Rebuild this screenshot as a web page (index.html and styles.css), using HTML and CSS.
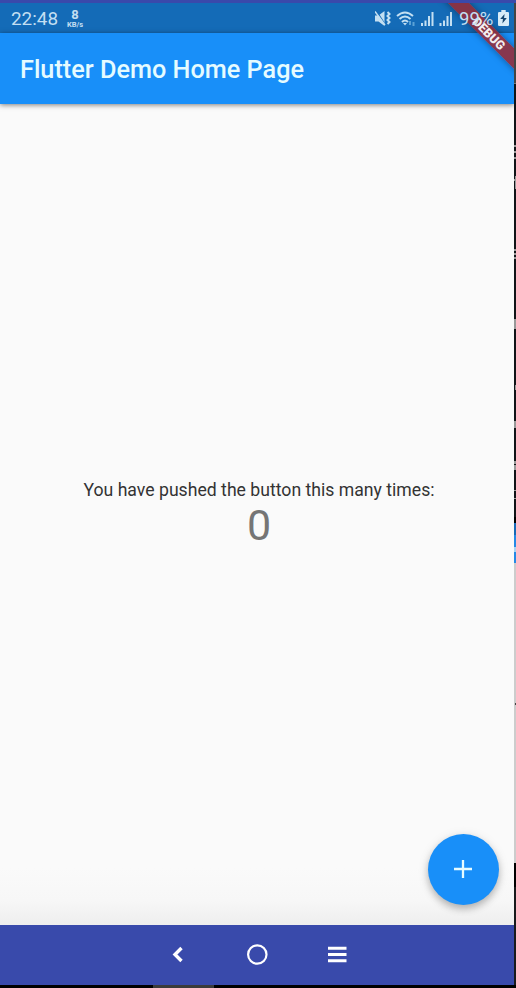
FILE: index.html
```html
<!DOCTYPE html>
<html lang="en">
<head>
<meta charset="utf-8">
<title>Flutter Demo</title>
<link rel="stylesheet" href="styles.css">
</head>
<body>
<div class="desktop">
  <div class="phone">
    <div class="window-edge"></div>
    <div class="screen">
      <header class="status">
        <span class="clock">22:48</span>
        <span class="rate"><b>8</b><small>KB/s</small></span>
        <svg class="status-icons" width="80" height="20" viewBox="0 0 80 20" fill="none" stroke="#c3dff2">
          <path d="M0 6.500h3.500L9.500 2v15l-6-4.500H0z" fill="#c3dff2" stroke="none"/>
          <path d="M1.500 2l9 14" stroke="#146bb7" stroke-width="1.300"/>
          <path d="M0 2.500l10 13.500" stroke-width="1.400"/>
          <path d="M12.500 3l2 2-2 2 2 2-2 2 2 2-2 2" stroke-width="2"/>
          <path d="M22 7q8-7 16 0M24.500 10q5.500-5 11 0M27 13q3-3 6 0" stroke-width="2"/>
          <path d="M28 14h4l-2 2.500z" fill="#c3dff2" stroke="none"/>
          <path d="M35 12v4M38.500 13v4" stroke="#5ba2d6" stroke-width="2"/>
          <path d="M47 14v3M50.500 11.500V17M54 7v10M57.500 3v14M65.500 14v3M69 11.500V17M72.500 7v10M76 3v14" stroke-width="2"/>
        </svg>
        <span class="percent">99%</span>
        <svg class="battery" width="11" height="16" viewBox="0 0 10 16" preserveAspectRatio="none">
          <path d="M3 0h4v2h2q1 0 1 1v12q0 1-1 1H1q-1 0-1-1V3q0-1 1-1h2z" fill="#d8ecf8"/>
          <path d="M6 4L2 9h2.500L4 13.500 8 8H5.500z" fill="#16456e"/>
        </svg>
      </header>
      <div class="appbar"><h1>Flutter Demo Home Page</h1></div>
      <main class="content">
        <p class="message">You have pushed the button this many times:</p>
        <p class="count">0</p>
        <button class="fab" aria-label="Increment">
          <svg width="18" height="18" viewBox="0 0 18 18"><path d="M9 0v18M0 9h18" stroke="#e5fbff" stroke-width="2.300"/></svg>
        </button>
      </main>
      <div class="ribbon"><span>DEBUG</span></div>
    </div>
    <nav class="navbar">
      <svg width="20" height="22" viewBox="0 0 20 22"><path d="M14.500 4L8 10.500l6.500 6.500" fill="none" stroke="#fff" stroke-width="3.400"/></svg>
      <svg width="22" height="22" viewBox="0 0 22 22"><circle cx="11.300" cy="10.500" r="9.200" fill="none" stroke="#fff" stroke-width="2.200"/></svg>
      <svg width="20" height="22" viewBox="0 0 20 22"><path d="M1 4.300h18.500M1 10.500h18.500M1 16.700h18.500" stroke="#fff" stroke-width="3"/></svg>
    </nav>
    <div class="taskbar"><div class="handle"></div></div>
  </div>
  <div class="backdrop">
    <svg width="2" height="988" viewBox="0 0 2 988">
      <path d="M0 0h2v3H0z" fill="#3a49ab"/>
      <path d="M0 3h2v80H0z" fill="#444"/>
      <path d="M0 83h2v1H0z" fill="#777"/>
      <path d="M0 84h2v433H0z" fill="#111417"/>
      <path d="M0 145h2v2H0zM0 151h2v2H0zM0 157h2v2H0zM0 179h2v2H0zM1 176h1v13H1zM0 249h2v2H0zM0 253h2v2H0zM0 257h2v2H0zM0 319h2v10H0zM1 385h1v5H1zM0 421h2v7H0zM0 461h2v3H0zM0 465h2v5H0zM0 490h2v1H0zM0 498h2v1H0z" fill="#999"/>
      <path d="M0 517h2v6H0z" fill="#000"/>
      <path d="M0 523h2v12H0z" fill="#1769b6"/>
      <path d="M0 535h2v28H0z" fill="#2589e5"/>
      <path d="M0 547h2v5H0z" fill="#a6d3f5"/>
      <path d="M0 563h2v300H0z" fill="#ccc"/>
      <path d="M1 703h1v2H1z" fill="#444"/>
      <path d="M0 863h2v24H0z" fill="#000"/>
      <path d="M0 887h2v98H0z" fill="#181a1c"/>
    </svg>
  </div>
</div>
</body>
</html>
```
FILE: styles.css
```css
* { box-sizing: border-box; }
body {
  margin: 0;
  background: #000;
  font-family: Roboto, sans-serif;
}
.desktop {
  display: flex;
  width: 516px;
  height: 988px;
  overflow: hidden;
}
.phone {
  display: flex;
  flex-direction: column;
  width: 514px;
}
.backdrop { width: 2px; background: #000; }
.backdrop svg { display: block; }
.window-edge { height: 3px; background: #3a49ab; }
.screen {
  position: relative;
  display: flex;
  flex-direction: column;
  height: 922px;
  overflow: hidden;
  background: #fafafa;
}
.status {
  display: flex;
  align-items: center;
  height: 30px;
  padding: 1px 5px 0 11px;
  background: #146bb7;
  color: #c3dff2;
}
.clock { width: 56px; font-size: 18.900px; }
.rate {
  display: flex;
  flex-direction: column;
  align-items: center;
  width: 18px;
  margin-left: -1px;
}
.rate b { font-size: 13px; font-weight: 700; line-height: 12px; }
.rate small { font-size: 7.500px; font-weight: 700; line-height: 8px; }
.status-icons { margin: 0 0 0 auto; }
.percent {
  position: relative;
  z-index: 3;
  width: 39px;
  margin-left: 4px;
  font-size: 18.500px;
}
.battery { margin-top: -2px; }
.appbar {
  display: flex;
  align-items: center;
  height: 71px;
  padding: 3px 20px 0;
  background: #188ff9;
  box-shadow: 0 1px 5px rgba(0, 0, 0, .5);
  z-index: 1;
}
.appbar h1 {
  margin: 0;
  color: #e5fbff;
  font-size: 25.250px;
  font-weight: 500;
  line-height: 30px;
  white-space: nowrap;
}
.content {
  position: relative;
  flex: 1;
  display: flex;
  flex-direction: column;
  align-items: center;
  justify-content: center;
  padding: 1px 0 0 4px;
  background: linear-gradient(#fafafa 93%, #f7f7f7 97%, #eee);
}
.content p { margin: 0; white-space: nowrap; }
.message { color: #333; font-size: 17.650px; line-height: 20px; }
.count { color: #757575; font-size: 43px; line-height: 50px; }
.fab {
  position: absolute;
  right: 15px;
  bottom: 20px;
  display: grid;
  place-items: center;
  width: 71px;
  height: 71px;
  padding: 0 1px 1px 0;
  border: 0;
  border-radius: 50%;
  background: #188ff9;
  box-shadow: 0 4px 7px rgba(0, 0, 0, .22), 0 2px 12px rgba(0, 0, 0, .1);
}
.ribbon {
  position: absolute;
  top: 23px;
  right: -35px;
  z-index: 2;
  width: 120px;
  height: 15px;
  transform: rotate(45deg);
  background: rgba(150, 43, 55, .88);
  box-shadow: 0 0 7px rgba(0, 0, 0, .4);
  color: #f3eef0;
  font-size: 12.500px;
  font-weight: 900;
  line-height: 15px;
  text-align: center;
}
.navbar {
  display: flex;
  align-items: center;
  justify-content: center;
  gap: 59px;
  height: 60px;
  background: #394aab;
}
.taskbar { height: 3px; padding-left: 153px; background: #000; }
.handle { width: 61px; height: 3px; background: #3b3b3b; }
```
